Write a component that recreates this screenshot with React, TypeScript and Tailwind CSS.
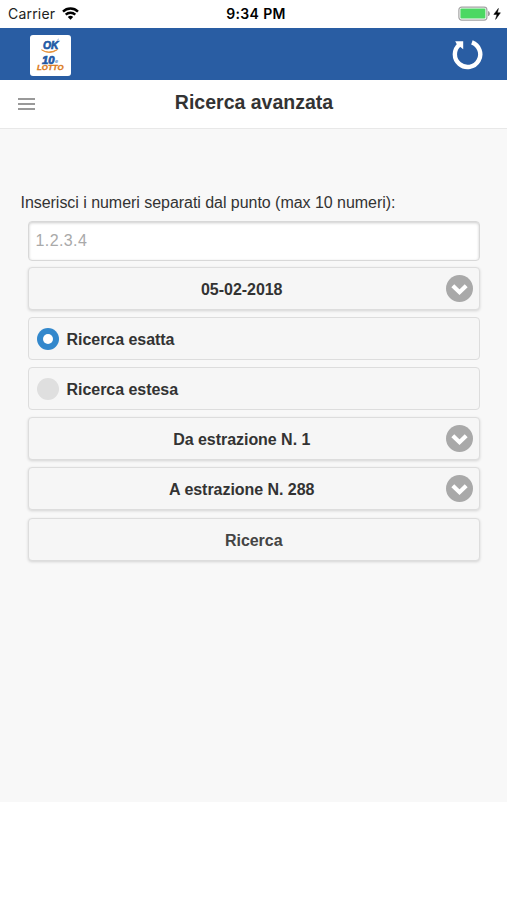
// Main
import { ReactNode } from "react";

const StatusBar = () => (
    <div className="relative flex h-7 items-center justify-between bg-white pl-2 pr-[5px] font-['Inter',sans-serif] text-black">
        <div className="flex items-center gap-[7px]">
            <span className="text-[14px] leading-7 tracking-[0.2px] text-[#222]">
                Carrier
            </span>
            <svg className="mb-px" width="17" height="13" viewBox="0 0 17 13" fill="none">
                <path
                    d="M1 4.6C5.2 .5 11.8 .5 16 4.6"
                    stroke="#000"
                    strokeWidth="2.4"
                />
                <path
                    d="M3.7 7.7C6.4 5.1 10.6 5.1 13.3 7.7"
                    stroke="#000"
                    strokeWidth="2.3"
                />
                <path d="M5.8 10Q8.5 7.6 11.2 10L8.5 12.7Z" fill="#000" />
            </svg>
        </div>
        <span className="absolute left-1/2 top-0 ml-[2.5px] -translate-x-1/2 whitespace-nowrap text-[14px] font-semibold leading-7 tracking-[0.35px]">
            9:34 PM
        </span>
        <svg width="44" height="16" viewBox="0 0 44 16">
            <rect
                x=".9"
                y="1.1"
                width="28"
                height="13"
                rx="2.8"
                fill="#fff"
                stroke="#a3a3a3"
                strokeWidth="1.2"
            />
            <rect x="2.4" y="2.6" width="25" height="10" rx="1" fill="#4bd863" />
            <path d="M30.6 5.5Q32.2 7.6 30.6 9.8Z" fill="#999" stroke="#999" />
            <path
                d="M40.4 2.4L35.8 8.4H39L37.6 13.4L42.4 6.8H39.4Z"
                fill="#000"
                stroke="#000"
                strokeWidth=".5"
            />
        </svg>
    </div>
);

const Logo = () => (
    <svg width="41" height="41" viewBox="0 0 41 41">
        <rect width="41" height="41" rx="3" fill="#fff" />
        <g
            fontFamily="Liberation Sans, sans-serif"
            fontWeight="bold"
            fontStyle="italic"
        >
            <text
                x="13"
                y="14"
                fontSize="11.5"
                textLength="15.5"
                lengthAdjust="spacingAndGlyphs"
                fill="#2159a5"
                stroke="#2159a5"
                strokeWidth=".7"
            >
                OK
            </text>
            <text
                x="12"
                y="28.6"
                fontSize="10.5"
                textLength="12.5"
                lengthAdjust="spacingAndGlyphs"
                fill="#2159a5"
                stroke="#2159a5"
                strokeWidth=".7"
            >
                10
            </text>
            <text x="25" y="28.2" fontSize="5.5" fill="#6f93c4">
                e
            </text>
            <text
                x="7"
                y="35"
                fontSize="7"
                textLength="26.5"
                lengthAdjust="spacingAndGlyphs"
                fill="#db7a1c"
                stroke="#db7a1c"
                strokeWidth=".3"
            >
                LOTTO
            </text>
        </g>
        <path
            d="M11.5 14.8Q18 19.3 27.5 14.6Q20 20.3 11.5 14.8Z"
            fill="#e58b2f"
            stroke="#e58b2f"
            strokeWidth=".8"
        />
        <path d="M27.2 5.2L29 3.8" stroke="#7fa3d3" strokeWidth=".8" />
    </svg>
);

const Header = () => (
    <header className="flex h-[52px] items-center justify-between bg-[#295da3] pl-[30px] pr-6 pt-[3px]">
        <Logo />
        <svg
            className="mb-[2px]"
            width="31"
            height="31"
            viewBox="0 0 31 31"
            fill="none"
        >
            <path
                d="M19.9 3.4A12.7 12.7 0 1 1 7.4 5.6"
                stroke="#fff"
                strokeWidth="4.4"
            />
            <path d="M3.2 2.3H11.2V10.3L8.4 8L4.8 5.2Z" fill="#fff" />
        </svg>
    </header>
);

const TitleBar = () => (
    <div className="relative flex h-[49px] items-center justify-center border-b border-[#e8e8e8] bg-white">
        <div className="absolute left-[18px] top-[18px] flex w-[17px] flex-col gap-[3px]">
            <span className="h-[2px] bg-[#999]" />
            <span className="h-[2px] bg-[#999]" />
            <span className="h-[2px] bg-[#999]" />
        </div>
        <h1 className="pb-[5px] pl-px text-[19.5px] font-bold leading-6">
            Ricerca avanzata
        </h1>
    </div>
);

const Box = ({ children, flat }: { children: ReactNode; flat?: boolean }) => (
    <div
        className={
            "relative flex h-[43px] items-center rounded-[4px] border border-[#dddddd] bg-[#f6f6f6] pt-[3px] text-[16px] font-bold leading-5 tracking-[-0.04px] " +
            (flat ? "" : "shadow-[0_1px_3px_rgba(0,0,0,0.15)]")
        }
    >
        {children}
    </div>
);

const Select = ({ label }: { label: string }) => (
    <Box>
        <span className="w-full pl-[26px] pr-[50px] text-center">{label}</span>
        <svg
            className="absolute right-[6px] top-[7px]"
            width="27"
            height="27"
            viewBox="0 0 27 27"
            fill="none"
        >
            <circle cx="13.5" cy="13.5" r="13.5" fill="#a9a9a9" />
            <path d="M6.8 10.8L13.5 17.2L20.2 10.8" stroke="#fff" strokeWidth="4.2" />
        </svg>
    </Box>
);

const Radio = ({ label, checked }: { label: string; checked?: boolean }) => (
    <Box flat>
        <span
            className={
                "mb-[2px] ml-2 mr-2 flex size-[22px] items-center justify-center rounded-full " +
                (checked ? "bg-[#3388cc]" : "bg-[#dfdfdf]")
            }
        >
            {checked && <span className="size-[10px] rounded-full bg-white" />}
        </span>
        {label}
    </Box>
);

const App = () => {
    return (
        <div className="h-[900px] w-[507px] overflow-hidden bg-white font-['Liberation_Sans',Arial,sans-serif] text-[#333]">
            <StatusBar />
            <Header />
            <TitleBar />

            <main className="h-[673px] bg-[#f8f8f8] pl-[20.5px] pr-[27px] pt-[63px]">
                <p className="text-[16px] leading-[22px] tracking-[-0.04px]">
                    Inserisci i numeri separati dal punto (max 10 numeri):
                </p>

                <form className="ml-[7px] mt-[7px] flex flex-col gap-[7.2px]">
                    <input
                        className="mb-[-1.5px] h-10 rounded-[4px] border border-[#d8d8d8] bg-white px-[7px] text-[16px] tracking-[0.4px] shadow-[inset_0_1px_3px_rgba(0,0,0,0.2)] outline-none placeholder:text-[#a9a9a9]"
                        placeholder="1.2.3.4"
                    />
                    <Select label="05-02-2018" />
                    <Radio label="Ricerca esatta" checked />
                    <Radio label="Ricerca estesa" />
                    <Select label="Da estrazione N. 1" />
                    <Select label="A estrazione N. 288" />
                    <Box>
                        <span className="w-full text-center text-[#444]">
                            Ricerca
                        </span>
                    </Box>
                </form>
            </main>
        </div>
    );
};

export default App;
